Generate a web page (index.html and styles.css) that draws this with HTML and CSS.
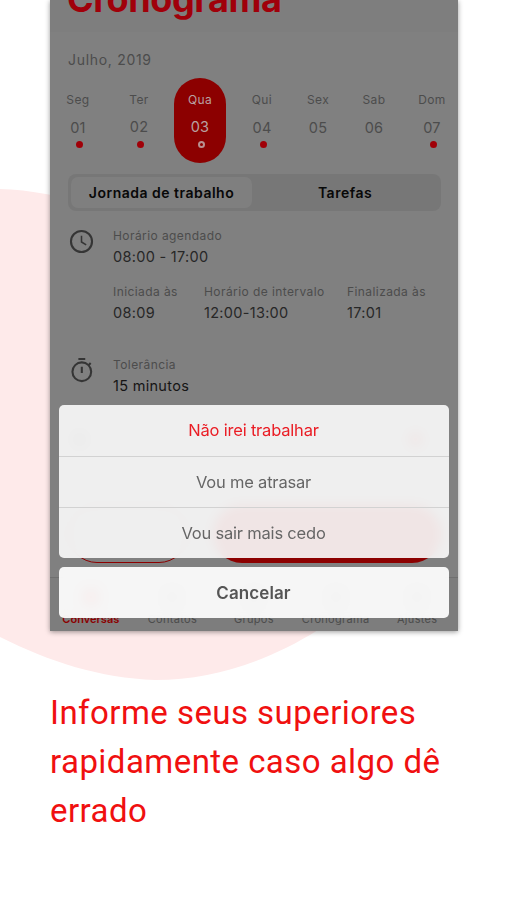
FILE: index.html
```
<!DOCTYPE html>
<html lang="pt-BR">
<head>
    <meta charset="UTF-8">
    <meta name="viewport" content="width=device-width, initial-scale=1.0">
    <title>Cronograma</title>
    <link rel="stylesheet" href="styles.css">
</head>
<body>
    <svg class="blob" viewBox="0 0 507 900" aria-hidden="true">
        <path d="M0 189C140 192 400 330 400 500C400 570 350 612 318 630C270 660 215 680 155 680C100 678 50 662 0 637Z"></path>
    </svg>

    <main class="phone">
        <header class="header">
            <h1>Cronograma</h1>
        </header>

        <div class="month">Julho, 2019</div>

        <ul class="week">
            <li class="day marked"><span>Seg</span><b>01</b></li>
            <li class="day marked raised"><span>Ter</span><b>02</b></li>
            <li class="day marked raised active"><span>Qua</span><b>03</b></li>
            <li class="day marked"><span>Qui</span><b>04</b></li>
            <li class="day"><span>Sex</span><b>05</b></li>
            <li class="day"><span>Sab</span><b>06</b></li>
            <li class="day marked"><span>Dom</span><b>07</b></li>
        </ul>

        <div class="tabs">
            <div class="tab selected">Jornada de trabalho</div>
            <div class="tab">Tarefas</div>
        </div>

        <section class="info">
            <svg class="icon" viewBox="0 0 24 24" fill="none" stroke="currentColor" stroke-width="2" aria-hidden="true">
                <circle cx="12" cy="12" r="10.1"></circle>
                <path d="M12 6.5v6l4.5 2.7" stroke-width="1.5"></path>
            </svg>
            <div class="info-body">
                <div class="field">
                    <div class="label">Horário agendado</div>
                    <div class="value">08:00 - 17:00</div>
                </div>
                <div class="times">
                    <div class="field">
                        <div class="label">Iniciada às</div>
                        <div class="value">08:09</div>
                    </div>
                    <div class="field">
                        <div class="label">Horário de intervalo</div>
                        <div class="value">12:00-13:00</div>
                    </div>
                    <div class="field">
                        <div class="label">Finalizada às</div>
                        <div class="value">17:01</div>
                    </div>
                </div>
            </div>
        </section>

        <section class="info tolerance">
            <svg class="icon" viewBox="0 0 24 24" fill="none" stroke="currentColor" stroke-width="2" aria-hidden="true">
                <circle cx="12.3" cy="13.2" r="9"></circle>
                <path d="M9 1h6.6M12.3 8.5v6M18.8 6.9l2-2"></path>
            </svg>
            <div class="field">
                <div class="label">Tolerância</div>
                <div class="value dark">15 minutos</div>
            </div>
        </section>

        <div class="place">
            <i class="dot"></i>
            <i class="dot red"></i>
        </div>

        <div class="actions">
            <div class="action outline"></div>
            <div class="action filled"></div>
        </div>

        <nav class="nav">
            <div class="nav-item current"><i></i>Conversas</div>
            <div class="nav-item"><i></i>Contatos</div>
            <div class="nav-item"><i></i>Grupos</div>
            <div class="nav-item"><i></i>Cronograma</div>
            <div class="nav-item"><i></i>Ajustes</div>
        </nav>

        <div class="sheet">
            <div class="sheet-group">
                <button class="option danger">Não irei trabalhar</button>
                <button class="option">Vou me atrasar</button>
                <button class="option">Vou sair mais cedo</button>
            </div>
            <button class="option cancel">Cancelar</button>
        </div>
    </main>

    <p class="caption">Informe seus superiores rapidamente caso algo dê errado</p>
</body>
</html>
```
FILE: styles.css
```
:root {
    --red: #8c0000;
    --screen: #808080;
    --muted: #4c4c4c;
    --text: #272727;
}

*, *::before, *::after {
    box-sizing: border-box;
    margin: 0;
    padding: 0;
}

body {
    width: 507px;
    height: 900px;
    overflow: hidden;
    background: #fff;
    font-family: Inter, Roboto, sans-serif;
}

.blob {
    position: absolute;
    top: 0;
    left: 0;
    width: 507px;
    height: 900px;
    fill: #feeaea;
}

.phone {
    position: relative;
    width: 408px;
    height: 631px;
    margin-left: 50px;
    overflow: hidden;
    background: var(--screen);
    color: var(--muted);
    display: flex;
    flex-direction: column;
    box-shadow: 0 1px 5px rgba(0, 0, 0, 0.4);
}

.header {
    height: 32px;
    flex-shrink: 0;
    padding-left: 17px;
    background: #7e7e7e;
    display: flex;
    align-items: flex-end;
}

.header h1 {
    color: #a0000a;
    font-size: 36px;
    font-weight: 700;
    line-height: 44px;
    letter-spacing: -0.4px;
    margin-bottom: 11px;
}

.month {
    margin: 18px 0 0 18px;
    font-size: 14px;
    line-height: 20px;
    letter-spacing: 0.7px;
    font-weight: 400;
}

/* Semana */
.week {
    list-style: none;
    display: grid;
    grid-template-columns: 61px 61px 62px 56px 56px 58px 52px;
    margin: 8px 0 0 2px;
}

.day {
    width: 52px;
    height: 85px;
    padding-top: 14px;
    border-radius: 26px;
    display: flex;
    flex-direction: column;
    align-items: center;
}

.day span {
    font-size: 12px;
    line-height: 16px;
    letter-spacing: 0.4px;
}

.day b {
    font-size: 14.5px;
    font-weight: 400;
    line-height: 18px;
    letter-spacing: 0.2px;
    margin-top: 11px;
}

.day.raised b {
    margin: 10px 0 1px;
}

.day.marked::after {
    content: "";
    width: 7px;
    height: 7px;
    margin: 4px 0 0 2px;
    border-radius: 50%;
    background: #a00008;
}

.day.active {
    background: var(--red);
    color: #b8a0a0;
}

.day.active::after {
    border: 2px solid #b89090;
    background: var(--red);
}

/* Abas */
.tabs {
    height: 37px;
    flex-shrink: 0;
    margin: 11px 17px 0 18px;
    padding: 3px;
    border-radius: 8px;
    background: #777;
    display: flex;
}

.tab {
    width: 182px;
    border-radius: 7px;
    text-align: center;
    color: #080808;
    font-size: 14px;
    font-weight: 600;
    line-height: 32px;
    letter-spacing: 0.5px;
}

.tab + .tab {
    width: 187px;
}

.tab.selected {
    background: #7f7f7f;
}

/* Jornada */
.info {
    display: flex;
    gap: 20px;
    margin: 17px 0 0 19px;
}

.icon {
    width: 25px;
    height: 25px;
    flex-shrink: 0;
    margin-top: 1px;
    color: #353535;
}

.field {
    margin-left: -1px;
}

.label {
    font-size: 12px;
    line-height: 16px;
    letter-spacing: 0.42px;
    white-space: nowrap;
}

.value {
    color: var(--text);
    font-size: 14.5px;
    line-height: 20px;
    letter-spacing: 0.3px;
    margin-top: 3px;
}

.value.dark {
    color: #151515;
}

.times {
    display: grid;
    grid-template-columns: 91px 143px 90px;
    margin-top: 17px;
}

.tolerance {
    margin-top: 34px;
}

/* Conteúdo atrás do menu */
.place {
    display: flex;
    justify-content: space-between;
    margin: 36px 35px 0 22px;
}

.dot {
    width: 15px;
    height: 15px;
    border-radius: 50%;
    background: #505050;
}

.dot.red {
    background: #8c2020;
}

.actions {
    display: flex;
    justify-content: space-between;
    margin: 58px 17px 0 18px;
}

.action {
    height: 58px;
    border-radius: 29px;
}

.action.outline {
    width: 120px;
    border: 1px solid var(--red);
}

.action.filled {
    width: 228px;
    background: var(--red);
}

.nav {
    height: 54px;
    margin-top: auto;
    flex-shrink: 0;
    border-top: 1px solid #707070;
    background: #7d7d7d;
    display: grid;
    grid-template-columns: repeat(5, 81.6px);
}

.nav-item {
    display: flex;
    flex-direction: column;
    align-items: center;
    font-size: 11px;
    line-height: 14px;
    letter-spacing: 0.3px;
}

.nav-item i {
    width: 18px;
    height: 18px;
    margin: 10px 0 6px;
    border-radius: 6px;
    background: #626262;
}

.nav-item.current {
    color: var(--red);
    font-weight: 600;
    letter-spacing: 0;
}

.nav-item.current i {
    background: #8c2020;
}

/* Menu de opções */
.sheet {
    position: absolute;
    left: 9px;
    right: 9px;
    bottom: 13px;
}

.sheet-group {
    border-radius: 5px;
    overflow: hidden;
    background: rgba(248, 248, 248, 0.92);
    backdrop-filter: blur(6px);
}

.option {
    display: block;
    width: 100%;
    height: 51px;
    padding-right: 1px;
    border: 0;
    background: none;
    color: #666;
    font-family: inherit;
    font-size: 16.5px;
    letter-spacing: -0.2px;
    line-height: 49px;
}

.option + .option {
    border-top: 1px solid #d2d2d2;
}

.option.danger {
    color: #ea1c24;
}

.option.cancel {
    margin-top: 9px;
    padding-top: 1px;
    border-radius: 5px;
    background: rgba(255, 255, 255, 0.93);
    backdrop-filter: blur(6px);
    color: #555;
    font-size: 17px;
    font-weight: 600;
    letter-spacing: 0.1px;
    line-height: 50px;
}

.caption {
    position: relative;
    width: 420px;
    margin: 57px 0 0 50px;
    color: #f01010;
    font-family: Roboto, sans-serif;
    font-size: 33px;
    line-height: 49px;
    letter-spacing: 0.45px;
}
```
